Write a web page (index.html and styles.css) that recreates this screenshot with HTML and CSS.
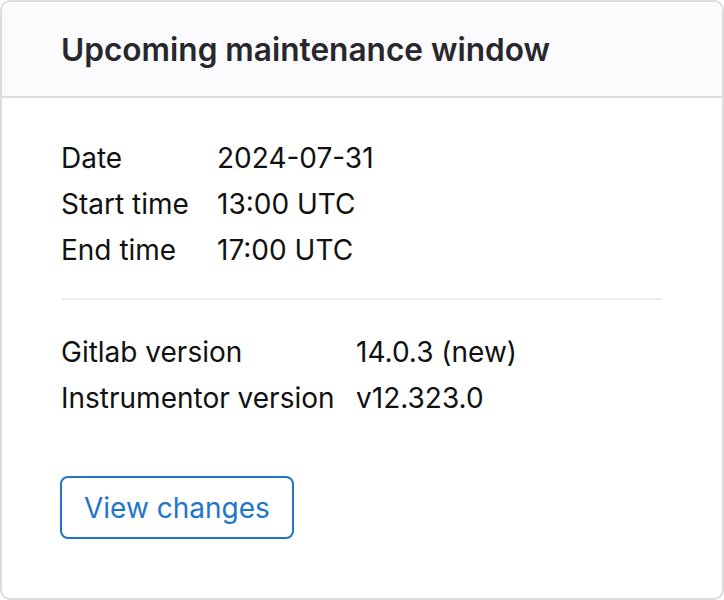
FILE: index.html
```html
<!DOCTYPE html>
<html lang="en">
<head>
<meta charset="utf-8">
<link rel="stylesheet" href="styles.css">
</head>
<body>
<section class="card">
  <header class="card-header">
    <h2 class="card-title">Upcoming maintenance window</h2>
  </header>
  <div class="card-body">
    <dl class="details details-window">
      <dt>Date</dt><dd>2024-07-31</dd>
      <dt>Start time</dt><dd>13:00 UTC</dd>
      <dt>End time</dt><dd>17:00 UTC</dd>
    </dl>
    <hr class="divider">
    <dl class="details details-versions">
      <dt>Gitlab version</dt><dd>14.0.3 (new)</dd>
      <dt>Instrumentor version</dt><dd>v12.323.0</dd>
    </dl>
    <button class="btn" type="button">View changes</button>
  </div>
</section>
</body>
</html>
```
FILE: styles.css
```css
html, body {
  margin: 0;
  padding: 0;
  background: #ffffff;
}
body {
  font-family: Inter, "Noto Sans", sans-serif;
  color: #111111;
}
.card {
  box-sizing: border-box;
  width: 724px;
  height: 600px;
  border: 2px solid #dcdcde;
  border-radius: 10px;
  overflow: hidden;
  background: #ffffff;
}
.card-header {
  box-sizing: border-box;
  height: 96px;
  background: #fbfafd;
  border-bottom: 2px solid #dcdcde;
  padding: 0 60px 0 59px;
  display: flex;
  align-items: center;
}
.card-title {
  margin: 0;
  font-size: 31.6px;
  font-weight: 600;
  line-height: 38px;
  color: #28272d;
  position: relative;
  top: 1px;
}
.card-body {
  padding: 37px 60px 0;
}
.details {
  display: grid;
  margin: 0;
  font-size: 28px;
  line-height: 46px;
  color: #111111;
}
.details-window {
  grid-template-columns: 156px 1fr;
}
.details-versions {
  grid-template-columns: 295px 1fr;
}
.details dt, .details dd {
  margin: 0;
  margin-left: -1px;
}
.divider {
  border: 0;
  border-top: 2px solid #ececef;
  margin: 25px 0 29px;
}
.btn {
  margin-top: 55px;
  margin-left: -2px;
  box-sizing: border-box;
  height: 63px;
  padding: 0 22px;
  border: 2px solid #1f75cb;
  border-radius: 8px;
  background: #ffffff;
  color: #1f75cb;
  font-family: Inter, "Noto Sans", sans-serif;
  font-size: 28px;
  line-height: 1;
}
```
